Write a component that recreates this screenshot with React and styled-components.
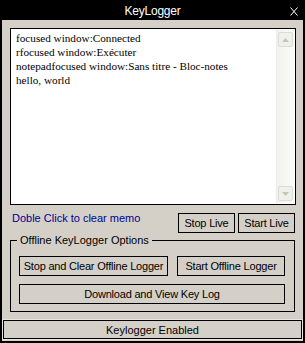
import React from "react";
import styled, { createGlobalStyle } from "styled-components";

const GlobalStyle = createGlobalStyle`
	html, body {
		margin: 0;
		padding: 0;
		background: #000;
	}
	* {
		box-sizing: border-box;
	}
`;

const memoLines = [
	"focused window:Connected",
	"rfocused window:Exécuter",
	"notepadfocused window:Sans titre - Bloc-notes",
	"hello, world",
];

function ArrowUp() {
	return (
		<svg width="7" height="4" viewBox="0 0 7 4">
			<path d="M3.5 0 L7 4 L0 4 Z" fill="#c4c4bc" />
		</svg>
	);
}

function ArrowDown() {
	return (
		<svg width="7" height="4" viewBox="0 0 7 4">
			<path d="M0 0 L7 0 L3.5 4 Z" fill="#c4c4bc" />
		</svg>
	);
}

function App() {
	return (
		<Window>
			<GlobalStyle />
			<TitleBar>
				<span>KeyLogger</span>
				<CloseIcon width="8" height="9" viewBox="0 0 8 9">
					<path d="M0.5 0.5 L7.5 8.5 M7.5 0.5 L0.5 8.5" stroke="#fff" strokeWidth="1" fill="none" />
				</CloseIcon>
			</TitleBar>

			<Body>
				<Memo>
					<MemoText>
						{memoLines.map((line) => (
							<div key={line}>{line}</div>
						))}
					</MemoText>
					<ScrollBar>
						<ScrollButton>
							<ArrowUp />
						</ScrollButton>
						<ScrollButton>
							<ArrowDown />
						</ScrollButton>
					</ScrollBar>
				</Memo>

				<LiveRow>
					<Hint>Doble Click to clear memo</Hint>
					<Button $width={57}>Stop Live</Button>
					<Button $width={57}>Start Live</Button>
				</LiveRow>

				<Group>
					<Legend>Offline KeyLogger Options</Legend>
					<GroupRow>
						<Button $width={149}>Stop and Clear Offline Logger</Button>
						<Button $width={108}>Start Offline Logger</Button>
					</GroupRow>
					<Button $width={266} $height={20}>Download and View Key Log</Button>
				</Group>

				<StatusBar>Keylogger Enabled</StatusBar>
			</Body>
		</Window>
	);
}

export default App;

const Window = styled.div`
	width: 305px;
	height: 343px;
	background: #000;
	display: flex;
	flex-direction: column;
	font-family: "Liberation Sans", Arial, sans-serif;
	font-size: 11px;
	overflow: hidden;
`;

const TitleBar = styled.div`
	height: 20px;
	flex-shrink: 0;
	display: flex;
	align-items: center;
	justify-content: center;
	position: relative;
	color: #fff;
	font-size: 12px;
	letter-spacing: -0.2px;
	padding-top: 1px;
`;

const CloseIcon = styled.svg`
	position: absolute;
	right: 7px;
	top: 7px;
`;

const Body = styled.div`
	flex: 1;
	margin: 0 2px 2px 2px;
	background: #d4d0c8;
	padding: 8px 0 0 0;
	display: flex;
	flex-direction: column;
`;

const Memo = styled.div`
	margin-left: 8px;
	width: 286px;
	height: 177px;
	border: 1px solid #000;
	background: #fff;
	display: flex;
`;

const MemoText = styled.div`
	flex: 1;
	padding: 2px 0 0 5px;
	font-family: "Liberation Serif", "Times New Roman", serif;
	font-size: 11.2px;
	line-height: 14px;
	color: #000;
`;

const ScrollBar = styled.div`
	width: 18px;
	margin: 1px 1px 1px 0;
	background: linear-gradient(to right, #f1f1ed, #fbfbf9);
	border-left: 1px solid #ececea;
	display: flex;
	flex-direction: column;
	justify-content: space-between;
	align-items: center;
	padding: 2px 0;
`;

const ScrollButton = styled.div`
	width: 15px;
	height: 15px;
	border: 1px solid #dcdcd6;
	border-radius: 2px;
	background: #f0f0ea;
	display: flex;
	align-items: center;
	justify-content: center;
`;

const LiveRow = styled.div`
	display: flex;
	align-items: center;
	margin-top: 8px;
	padding: 0 8px 0 10px;
	gap: 3px;
`;

const Hint = styled.span`
	flex: 1;
	color: #000090;
	font-size: 11px;
	margin-top: -10px;
`;

const Button = styled.div`
	width: ${(p) => p.$width}px;
	height: ${(p) => p.$height || 20}px;
	border: 1px solid #000;
	background: #d4d0c8;
	color: #000;
	display: flex;
	align-items: center;
	justify-content: center;
	font-size: 11px;
	letter-spacing: -0.2px;
	white-space: nowrap;
`;

const Group = styled.div`
	position: relative;
	margin: 7px 0 0 8px;
	width: 285px;
	height: 72px;
	border: 1px solid #000;
	padding: 15px 0 0 8px;
	display: flex;
	flex-direction: column;
	gap: 8px;
`;

const Legend = styled.span`
	position: absolute;
	top: -8px;
	left: 6px;
	padding: 0 3px;
	background: #d4d0c8;
	line-height: 14px;
`;

const GroupRow = styled.div`
	display: flex;
	gap: 9px;
`;

const StatusBar = styled.div`
	margin: 8px 0 0 1px;
	width: 299px;
	height: 19px;
	border: 1px solid #000;
	box-shadow: 0 0 0 1px #e8e6e0;
	display: flex;
	align-items: center;
	justify-content: center;
	font-size: 11px;
`;
